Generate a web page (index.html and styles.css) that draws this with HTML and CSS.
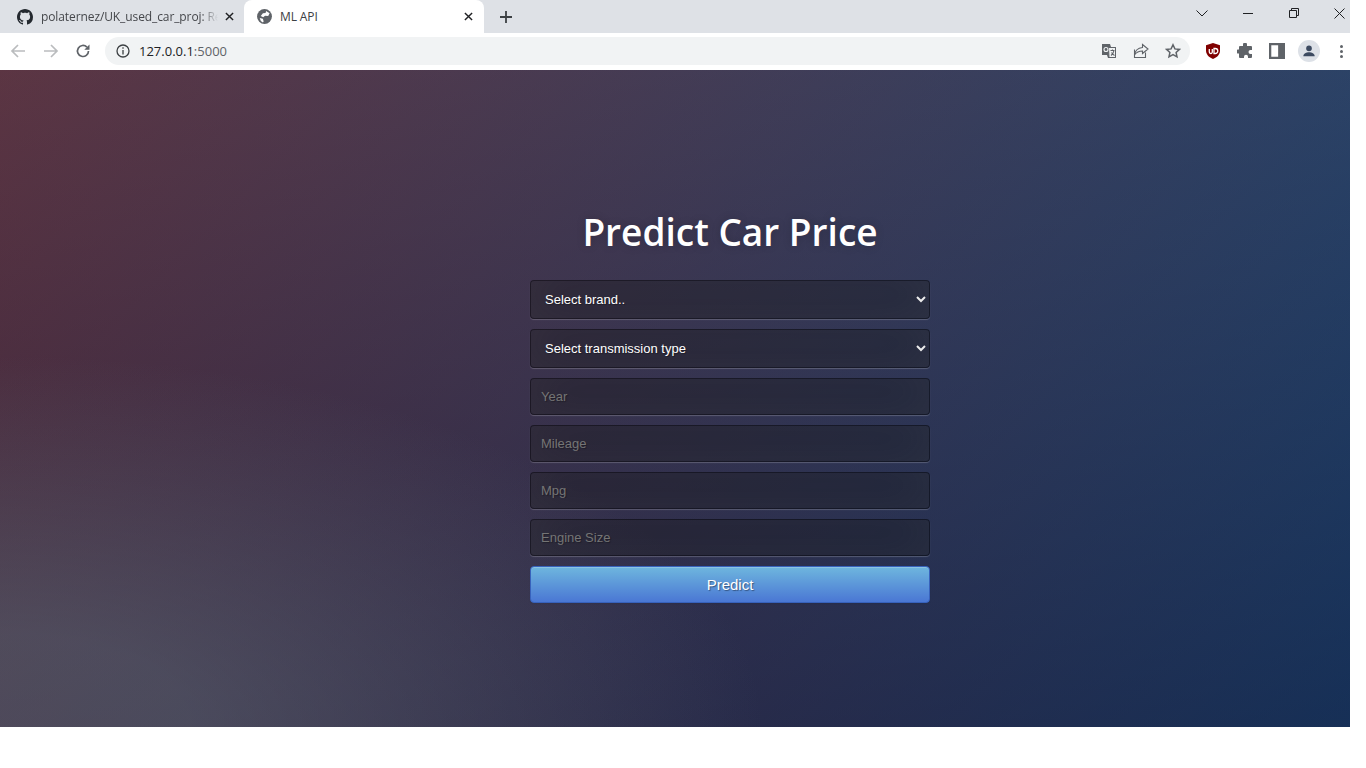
FILE: index.html
```html
<!DOCTYPE html>
<html lang="en">
<head>
    <meta charset="UTF-8">
    <title>ML API</title>
    <link rel="stylesheet" href="styles.css">
</head>
<body>
<div class="browser">

    <div class="tabstrip">
        <div class="tab">
            <svg class="favicon" viewBox="0 0 16 16"><path fill="#24292f" d="M8 0C3.58 0 0 3.58 0 8c0 3.54 2.29 6.53 5.47 7.59.4.07.55-.17.55-.38 0-.19-.01-.82-.01-1.49-2.01.37-2.53-.49-2.69-.94-.09-.23-.48-.94-.82-1.13-.28-.15-.68-.52-.01-.53.63-.01 1.08.58 1.23.82.72 1.21 1.87.87 2.33.66.07-.52.28-.87.51-1.07-1.78-.2-3.64-.89-3.64-3.95 0-.87.31-1.59.82-2.15-.08-.2-.36-1.02.08-2.12 0 0 .67-.21 2.2.82.64-.18 1.32-.27 2-.27s1.36.09 2 .27c1.53-1.04 2.2-.82 2.2-.82.44 1.1.16 1.92.08 2.12.51.56.82 1.27.82 2.15 0 3.07-1.87 3.75-3.65 3.95.29.25.54.73.54 1.48 0 1.07-.01 1.93-.01 2.2 0 .21.15.46.55.38A8.01 8.01 0 0 0 16 8c0-4.42-3.58-8-8-8z"/></svg>
            <span class="tab-title tab-title-long">polaternez/UK_used_car_proj: Rep</span>
            <svg class="tab-close" viewBox="0 0 10 10"><path d="M1 1l8 8M9 1l-8 8"/></svg>
        </div>
        <div class="tab tab-active">
            <svg class="favicon favicon-globe" viewBox="0 0 16 16"><circle fill="#5f6368" cx="8" cy="8" r="7"/><path fill="#fff" d="M9.500 2.800l3.300 2.200-1.300 2.500-3-.3-1.700 1.500-2.300-1.200L6.500 5l2.500-.3zM3.500 9.500l3 .7.700 2.500-.7 1-2-1.500z"/></svg>
            <span class="tab-title">ML API</span>
            <svg class="tab-close" viewBox="0 0 10 10"><path d="M1 1l8 8M9 1l-8 8"/></svg>
        </div>
        <svg class="new-tab" viewBox="0 0 12 12"><path d="M6 0v12M0 6h12"/></svg>
        <div class="window-controls">
            <svg class="win-chevron" viewBox="0 0 12 7"><path d="M.5.5L6 6 11.500.5"/></svg>
            <svg class="win-min" viewBox="0 0 10 1"><path d="M0 .5h10"/></svg>
            <svg class="win-restore" viewBox="0 0 10 10"><path d="M.5 2.500h7v7h-7zM2.500 2.500V.5h7v7H7.500"/></svg>
            <svg class="win-close" viewBox="0 0 11 11"><path d="M.5.5l10 10M10.500.5l-10 10"/></svg>
        </div>
    </div>

    <div class="toolbar">
        <div class="nav-buttons">
            <svg class="nav-icon nav-off" viewBox="0 0 16 16"><path d="M15 8H2M8 2L2 8l6 6"/></svg>
            <svg class="nav-icon nav-off" viewBox="0 0 16 16"><path d="M1 8h13M8 2l6 6-6 6"/></svg>
            <svg class="nav-icon nav-reload" viewBox="0 0 16 16"><path d="M13.500 8a5.500 5.500 0 1 1-1.600-3.900"/><path class="solid" d="M14.500 1.500v5.200H9.300z"/></svg>
        </div>
        <div class="omnibox">
            <svg class="info-icon" viewBox="0 0 14 14"><circle cx="7" cy="7" r="6"/><path d="M7 6v4.500M7 3.300v1.500"/></svg>
            <span class="url">127.0.0.1<span class="url-port">:5000</span></span>
            <div class="omni-actions">
                <svg class="omni-icon" viewBox="0 0 16 16"><path class="grey-fill" d="M1 1h8l1 3h5v11H7l-1-3H1z"/><path class="paper" d="M7.500 4.500h7v10H8z"/><path class="thin" d="M9.500 7.500h4M11.500 6.500v1M10 12.500c1.500-1 2.500-2.500 3-5M10.500 9.500c.7 1.300 1.700 2.300 3 3"/><circle class="thin-white" cx="5" cy="6.500" r="2"/></svg>
                <svg class="omni-icon" viewBox="0 0 16 16"><path class="thin" d="M9.500 1.500L15 6l-5.500 4.500V8C6 8 3.500 9 1.500 12c.5-4 3-7 8-7.500zM12.500 9.500v5h-11v-8"/></svg>
                <svg class="omni-icon" viewBox="0 0 16 16"><path class="star" d="M8 1.800l1.900 4.100 4.500.5-3.300 3 .9 4.400L8 11.600l-4 2.200.9-4.400-3.300-3 4.500-.5z"/></svg>
            </div>
        </div>
        <div class="extensions">
            <svg class="ext-icon" viewBox="0 0 16 16"><path fill="#800000" d="M8 0l7 2.200v5.300c0 4-3 6.900-7 8.500-4-1.600-7-4.500-7-8.500V2.200z"/><path class="ublock" d="M4.300 6v3a1.500 1.500 0 0 0 3 0V6M9 5.500v5h1.300a2.500 2.500 0 0 0 0-5z"/></svg>
            <svg class="ext-icon" viewBox="0 0 16 16"><path fill="#5f6368" d="M6 1.500a2 2 0 0 1 4 0V3h4a1 1 0 0 1 1 1v3h-1.500a2 2 0 0 0 0 4H15v3a1 1 0 0 1-1 1h-3v-1.300a2 2 0 0 0-4 0V15H3a1 1 0 0 1-1-1v-3.500H1a2 2 0 0 1 0-4h1V4a1 1 0 0 1 1-1h3z"/></svg>
            <svg class="ext-icon" viewBox="0 0 14 14"><path fill="#5f6368" d="M0 0h14v14H0zM2 2v10h6V2z"/></svg>
            <div class="avatar">
                <svg viewBox="0 0 16 16"><circle fill="#3c4a60" cx="8" cy="5" r="3.200"/><path fill="#3c4a60" d="M1.500 14c0-3 3.500-4.500 6.500-4.500s6.500 1.500 6.500 4.500z"/></svg>
            </div>
            <div class="menu-dots"><i></i><i></i><i></i></div>
        </div>
    </div>

    <div class="page">
        <div class="login">
            <h1>Predict Car Price</h1>
            <form>
                <select name="brand">
                    <option>Select brand..</option>
                    <option>Audi</option>
                    <option>BMW</option>
                    <option>Ford</option>
                </select>
                <select name="transmission">
                    <option>Select transmission type</option>
                    <option>Manual</option>
                    <option>Automatic</option>
                </select>
                <input type="text" name="year" placeholder="Year">
                <input type="text" name="mileage" placeholder="Mileage">
                <input type="text" name="mpg" placeholder="Mpg">
                <input type="text" name="engine" placeholder="Engine Size">
                <button type="button" class="btn-primary">Predict</button>
            </form>
        </div>
    </div>

</div>
</body>
</html>
```

FILE: styles.css
```css
* {
    box-sizing: border-box;
}

body {
    margin: 0;
    background-color: #fff;
    font-family: "Liberation Sans", Arial, sans-serif;
}

.browser {
    width: 1350px;
    overflow: hidden;
}

svg {
    display: block;
    flex: none;
}

/* tab strip */
.tabstrip {
    display: flex;
    align-items: center;
    height: 33px;
    background-color: #dee1e6;
}

.tab {
    position: relative;
    display: flex;
    align-items: center;
    width: 244px;
    height: 33px;
    padding: 0 10px 0 17px;
    font-family: "Open Sans", sans-serif;
    font-size: 12px;
    letter-spacing: -.1px;
    color: #45474b;
}

.tab-active {
    width: 240px;
    padding: 0 11px 0 12px;
    background-color: #fff;
    border-radius: 8px 8px 0 0;
    color: #3c4043;
}

.favicon {
    width: 16px;
    height: 16px;
}

.favicon-globe {
    width: 17px;
    height: 17px;
    margin-right: -1px;
}

.tab-title {
    flex: 1;
    min-width: 0;
    margin-left: 8px;
    white-space: nowrap;
}

.tab-title-long {
    margin-right: -8px;
    -webkit-mask-image: linear-gradient(to right, #000 160px, transparent 177px);
    mask-image: linear-gradient(to right, #000 160px, transparent 177px);
}

.tab-close {
    width: 9px;
    height: 9px;
    fill: none;
    stroke: #202124;
    stroke-width: 1.6;
}

.new-tab {
    width: 12px;
    height: 12px;
    margin-left: 16px;
    fill: none;
    stroke: #3c4043;
    stroke-width: 1.8;
}

.window-controls {
    display: flex;
    align-items: center;
    margin-left: auto;
    margin-top: -7px;
    fill: none;
    stroke: #202124;
    stroke-width: 1;
}

.win-chevron {
    width: 12px;
    height: 7px;
    margin-right: 35px;
}

.win-min {
    width: 10px;
    height: 1px;
    margin-right: 36px;
}

.win-restore {
    width: 10px;
    height: 10px;
    margin-right: 35px;
}

.win-close {
    width: 11px;
    height: 11px;
    margin-right: 5px;
}

/* toolbar */
.toolbar {
    display: flex;
    align-items: center;
    height: 37px;
    padding: 0 0 1px 0;
    background-color: #fff;
}

.nav-buttons {
    display: flex;
    align-items: center;
    gap: 17px;
    width: 105px;
    padding-left: 10px;
}

.nav-icon {
    width: 16px;
    height: 16px;
    fill: none;
    stroke: #5f6368;
    stroke-width: 1.7;
}

.nav-reload {
    margin-left: -1px;
}

.nav-off {
    stroke: #babcbe;
}

.nav-icon .solid {
    fill: #5f6368;
    stroke: none;
}

.omnibox {
    display: flex;
    align-items: center;
    width: 1085px;
    height: 28px;
    padding: 0 9px 0 11px;
    background-color: #f1f3f4;
    border-radius: 14px;
}

.info-icon {
    width: 14px;
    height: 14px;
    fill: none;
    stroke: #3c4043;
    stroke-width: 1.300;
}

.url {
    margin-left: 9px;
    font-family: "Open Sans", sans-serif;
    font-size: 13px;
    color: #202124;
}

.url-port {
    color: #5f6368;
}

.omni-actions {
    display: flex;
    gap: 16px;
    margin-left: auto;
}

.omni-icon {
    width: 16px;
    height: 16px;
}

.grey-fill {
    fill: #5f6368;
}

.paper {
    fill: #f1f3f4;
    stroke: #5f6368;
}

.thin {
    fill: none;
    stroke: #5f6368;
    stroke-width: 1.100;
}

.thin-white {
    fill: none;
    stroke: #f1f3f4;
    stroke-width: 1.100;
}

.star {
    fill: none;
    stroke: #5f6368;
    stroke-width: 1.500;
}

.extensions {
    display: flex;
    align-items: center;
    gap: 16px;
    margin-left: 15px;
}

.ext-icon {
    width: 16px;
    height: 16px;
}

.ublock {
    fill: none;
    stroke: #fff;
    stroke-width: 1.300;
}

.avatar {
    display: flex;
    align-items: center;
    justify-content: center;
    width: 22px;
    height: 22px;
    margin: 0 -3px;
    border-radius: 50%;
    background-color: #dde1e7;
}

.avatar svg {
    width: 14px;
    height: 14px;
}

.menu-dots {
    display: flex;
    flex-direction: column;
    gap: 2px;
    margin-left: 7px;
}

.menu-dots i {
    width: 3px;
    height: 3px;
    border-radius: 50%;
    background-color: #5f6368;
}

/* page */
.page {
    height: 657px;
    padding: 134px 0 0 530px;
    background:
        radial-gradient(ellipse farthest-corner at 0% 100%, rgba(104, 128, 138, .4) 10%, rgba(138, 114, 76, 0) 40%),
        linear-gradient(to bottom, rgba(57, 173, 219, .25) 0%, rgba(42, 60, 87, .4) 100%),
        linear-gradient(135deg, #670d10 0%, #092756 100%);
}

.login {
    width: 400px;
}

h1 {
    margin: 0 0 20px;
    height: 56px;
    font-family: "Open Sans", sans-serif;
    font-size: 37px;
    font-weight: 600;
    line-height: 56px;
    text-align: center;
    color: #fff;
    text-shadow: 0 0 10px rgba(0, 0, 0, .2);
}

form {
    display: flex;
    flex-direction: column;
    gap: 10px;
}

input, select {
    width: 100%;
    font-family: "Liberation Sans", Arial, sans-serif;
    font-size: 13px;
    color: #fff;
    background: rgba(0, 0, 0, .3);
    border: 1px solid rgba(0, 0, 0, .3);
    border-radius: 4px;
    outline: none;
    box-shadow: inset 0 -5px 45px rgba(100, 100, 100, .2), 0 1px 1px rgba(255, 255, 255, .2);
    text-shadow: 1px 1px 1px rgba(0, 0, 0, .3);
}

input {
    height: 37px;
    padding: 10px;
}

select {
    height: 39px;
    padding: 10px;
}

select option {
    color: #fff;
    background-color: #2b2b3d;
}

.btn-primary {
    width: 100%;
    height: 37px;
    padding: 9px 14px;
    font-family: "Liberation Sans", Arial, sans-serif;
    font-size: 15px;
    color: #fff;
    background-color: #4a77d4;
    background-image: linear-gradient(to bottom, #6eb6de, #4a77d4);
    border: 1px solid #3762bc;
    border-radius: 4px;
    box-shadow: inset 0 1px 0 rgba(255, 255, 255, .2), 0 1px 2px rgba(0, 0, 0, .05);
    text-shadow: 1px 1px 1px rgba(0, 0, 0, .4);
    cursor: pointer;
}
```
